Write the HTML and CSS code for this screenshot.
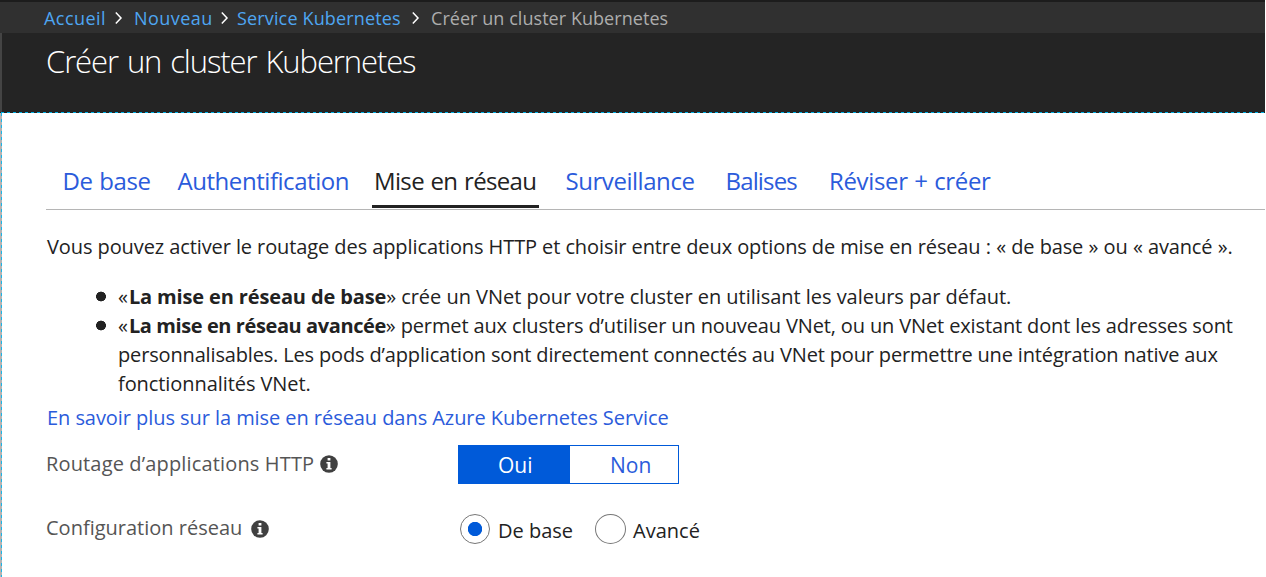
FILE: index.html
```html
<!DOCTYPE html>
<html lang="fr">
<head>
<meta charset="utf-8">
<title>Créer un cluster Kubernetes</title>
<link rel="stylesheet" href="styles.css">
</head>
<body>
<div class="app">
  <nav class="breadcrumb">
    <div class="crumb"><a class="crumb-home">Accueil</a><svg class="chevron" viewBox="0 0 7 12"><path d="M0.8 0.6L6 6L0.8 11.4"/></svg></div>
    <div class="crumb crumb-tight"><a class="crumb-new">Nouveau</a><svg class="chevron" viewBox="0 0 7 12"><path d="M0.8 0.6L6 6L0.8 11.4"/></svg></div>
    <div class="crumb"><a class="crumb-service">Service Kubernetes</a><svg class="chevron" viewBox="0 0 7 12"><path d="M0.8 0.6L6 6L0.8 11.4"/></svg></div>
    <div class="crumb"><span class="crumb-current">Créer un cluster Kubernetes</span></div>
  </nav>
  <header class="blade-header"><h1 class="title">Créer un cluster Kubernetes</h1></header>
  <div class="focus-line"></div>
  <main class="blade">
    <svg class="focus-edge" width="2" height="465"><path class="edge-base" d="M1 0V465"/><path class="edge-dash" d="M1.5 0V465"/></svg>
    <div class="content">
      <div class="tabs">
        <a class="tab tab-basics">De base</a>
        <a class="tab tab-auth">Authentification</a>
        <a class="tab tab-network">Mise en réseau</a>
        <a class="tab tab-monitor">Surveillance</a>
        <a class="tab tab-tags">Balises</a>
        <a class="tab tab-review">Réviser + créer</a>
      </div>
      <p class="intro">Vous pouvez activer le routage des applications HTTP et choisir entre deux options de <span class="intro-end">mise en réseau : « de base » ou « avancé ».</span></p>
      <ul class="options">
        <li>«<b class="name-basic">La mise en réseau de base</b><span class="line-first">» crée un VNet pour votre cluster en utilisant les valeurs par défaut.</span></li>
        <li>«<b class="name-advanced">La mise en réseau avancée</b><span class="line-a">» permet aux clusters d’utiliser un nouveau VNet, ou un VNet existant dont les adresses sont</span><br>
          <span class="line-b">personnalisables. Les pods d’application sont directement connectés au VNet pour permettre une intégration native aux</span><br>
          <span class="line-c">fonctionnalités VNet.</span></li>
      </ul>
      <a class="learn">En savoir plus sur la mise en réseau dans Azure Kubernetes Service</a>
      <div class="field field-http">
        <div class="label"><span class="label-http">Routage d’applications HTTP</span>
          <svg class="info" viewBox="0 0 18 18"><circle cx="9" cy="9" r="8.8"/><path d="M7.6 3h2.8v2.6H7.6zM6.4 7h4v6h1.2v1.5H6.4V13h1.2V8.5H6.4z"/></svg></div>
        <div class="toggle"><span class="toggle-on">Oui</span><span class="toggle-off">Non</span></div>
      </div>
      <div class="field field-network">
        <div class="label label-network"><span>Configuration réseau</span>
          <svg class="info" viewBox="0 0 18 18"><circle cx="9" cy="9" r="8.8"/><path d="M7.6 3h2.8v2.6H7.6zM6.4 7h4v6h1.2v1.5H6.4V13h1.2V8.5H6.4z"/></svg></div>
        <div class="radios">
          <span class="radio radio-checked"></span><span class="radio-text radio-basic">De base</span>
          <span class="radio radio-wide"></span><span class="radio-text">Avancé</span>
        </div>
      </div>
    </div>
  </main>
</div>
</body>
</html>
```

FILE: styles.css
```css
* { box-sizing: border-box; }
body {
  margin: 0;
  background: #fff;
  color: #222;
  font: 20px/29px "Open Sans", "Noto Sans", sans-serif;
  white-space: nowrap;
}
.app { width: 1265px; height: 577px; overflow: hidden; }

.breadcrumb {
  display: grid;
  grid-template-columns: 90px 103px 194px auto;
  height: 33px;
  padding-left: 44px;
  border-top: 2px solid #1c1c1c;
  background: #303030;
  color: #4ea6f2;
  font-size: 18px;
  line-height: 31px;
}
.crumb { display: flex; height: 31px; justify-content: space-between; align-items: center; padding-right: 12px; }
.crumb > a, .crumb > span { line-height: 29px; padding-top: 2px; }
.crumb-tight { padding-right: 9px; }
.crumb-home { letter-spacing: 0.45px; }
.crumb-new { letter-spacing: 0.45px; }
.crumb-service { letter-spacing: 0.148px; }
.crumb-current { color: #adadad; letter-spacing: 0.05px; }
.chevron { width: 7px; height: 12px; fill: none; stroke: #fff; stroke-width: 1.5; overflow: visible; }

.blade-header {
  height: 79px;
  padding: 8px 0 0 44px;
  border-left: 2px solid #444;
  background: #242424;
}
.title { margin: 0; color: #fff; font-size: 31px; font-weight: 300; line-height: 41px; letter-spacing: -1.1px; word-spacing: 2px; }
.focus-line {
  height: 1px;
  background: repeating-linear-gradient(90deg, #222 0 1px, #00b1e6 1px 4px, #222 4px 6px);
}

.blade { display: flex; height: 464px; }
.focus-edge { flex: none; }
.edge-base { stroke: #b4b4b4; stroke-width: 2; }
.edge-dash { stroke: #19b5e8; stroke-width: 1; stroke-dasharray: 3 3; }
.content { flex: 1; padding: 40px 0 0 44px; }

.tabs {
  display: grid;
  grid-template-columns: 115.5px 194.5px 193.5px 160px 103.5px auto;
  height: 57px;
  padding-left: 16px;
  border-bottom: 1px solid #b5b5b5;
  color: #2b5bdb;
  font-size: 24px;
  line-height: 55px;
}
.tab { height: 55px; }
.tab-basics { padding-left: 0.5px; letter-spacing: -0.45px; word-spacing: 1px; }
.tab-auth { letter-spacing: -0.45px; }
.tab-network { width: 167px; padding-left: 2px; color: #222; letter-spacing: -0.65px; word-spacing: 1px; box-shadow: inset 0 -3px #222; }
.tab-monitor { letter-spacing: -0.45px; }
.tab-tags { letter-spacing: -0.85px; }
.tab-review { letter-spacing: -0.35px; word-spacing: 0.7px; }

.intro { margin: 22px 0 0 1px; letter-spacing: -0.092px; }
.intro-end { letter-spacing: -0.16px; word-spacing: 0.3px; }
.options { margin: 21px 0 0; padding: 0; list-style: none; }
.options li { padding-left: 72px; background: radial-gradient(circle at 55px 14.5px, #222 4.6px, transparent 5.2px); }
.options b { margin-left: 1px; }
.name-basic { letter-spacing: -0.139px; }
.line-first { letter-spacing: -0.03px; }
.name-advanced { letter-spacing: -0.408px; }
.line-a { letter-spacing: -0.132px; }
.line-b { letter-spacing: -0.157px; }
.line-c { letter-spacing: -0.074px; }
.learn { display: block; margin: 5px 0 0 1px; color: #2b5bdb; letter-spacing: -0.06px; }

.field { display: flex; }
.field-http { height: 39px; margin-top: 13px; }
.field-network { height: 32px; margin-top: 29px; }
.label { display: flex; width: 412px; gap: 6px; padding-top: 4px; color: #555; }
.label-network { gap: 9px; padding-top: 0; }
.label-http { letter-spacing: 0.15px; }
.info { width: 18px; height: 18px; margin-top: 6px; fill: #404040; }
.info path { fill: #fff; }
.label-network .info { margin-top: 7px; }
.toggle { display: grid; grid-template-columns: 112px 109px; height: 39px; font-size: 21px; line-height: 39px; }
.toggle-on { padding: 1px 0 0 40px; height: 39px; background: #005ad9; color: #fff; }
.toggle-off { padding-left: 40px; height: 39px; border: 1px solid #005ad9; border-left: 0; color: #2b5bdb; }
.radios { display: flex; align-items: center; padding-left: 2px; }
.radio { width: 30px; height: 30px; border: 1px solid #777; border-radius: 50%; }
.radio-wide { width: 31px; }
.radio-checked { background: radial-gradient(circle, #005ad9 6.8px, transparent 7.5px); }
.radio-text { margin: 2px 0 0 7px; }
.radio-basic { margin: 2px 22px 0 8px; }
```
